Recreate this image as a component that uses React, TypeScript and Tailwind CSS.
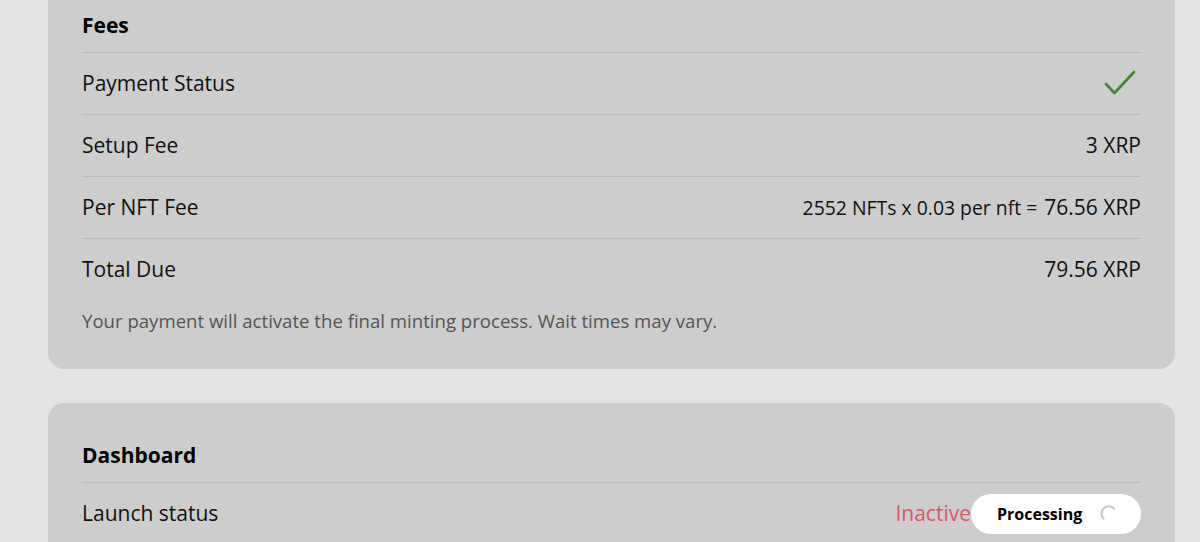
// @ts-nocheck
import React from "react";

const font = { fontFamily: '"Segoe UI", "Open Sans", "Noto Sans", sans-serif' };

function CheckIcon() {
  return (
    <svg width="34" height="30" viewBox="0 0 34 30" fill="none">
      <path d="M3 15 L11.5 24 L31 3" stroke="#3b8a2c" strokeWidth="2.6" strokeLinecap="round" strokeLinejoin="round" />
    </svg>
  );
}

function Spinner() {
  return (
    <svg width="20" height="20" viewBox="0 0 20 20" fill="none">
      <path d="M15 4.5 A7 7 0 0 0 4.5 14.5" stroke="#c8c8c8" strokeWidth="2.2" strokeLinecap="round" />
    </svg>
  );
}

function Row({ label, children, last }: { label: string; children: React.ReactNode; last?: boolean }) {
  return (
    <div className={last ? "flex h-[61px] items-center justify-between" : "flex h-[62px] items-center justify-between border-b border-[#bababa]"}>
      <span className="text-[21px] text-[#111]">{label}</span>
      <div className="flex items-center text-[21px] text-[#111]">{children}</div>
    </div>
  );
}

export default function App() {
  return (
    <div className="h-[542px] w-[1200px] overflow-hidden bg-[#e4e4e4]" style={font}>
      <div className="-mt-[27px] flex flex-col gap-[34px] pl-[48px] pr-[25px]">
        <div className="rounded-2xl bg-[#cdcdcd] px-[34px] pt-[38px] pb-[36px]">
          <div className="border-b border-[#bababa] pb-[13px]">
            <h3 className="text-[21px] font-bold leading-[28px] text-black">Fees</h3>
          </div>
          <Row label="Payment Status">
            <div className="mr-[4px]">
              <CheckIcon />
            </div>
          </Row>
          <Row label="Setup Fee">3 XRP</Row>
          <Row label="Per NFT Fee">
            <span className="mr-[7px] text-[19.4px]">2552 NFTs x 0.03 per nft =</span>
            <span>76.56 XRP</span>
          </Row>
          <Row label="Total Due" last>
            79.56 XRP
          </Row>
          <p className="mt-[9px] text-[18.6px] leading-[24px] text-[#555]">
            Your payment will activate the final minting process. Wait times may vary.
          </p>
        </div>

        <div className="rounded-2xl bg-[#cdcdcd] px-[34px] pt-[38px] pb-[34px]">
          <div className="border-b border-[#bababa] pb-[13px]">
            <h3 className="text-[21px] font-bold leading-[28px] text-black">Dashboard</h3>
          </div>
          <div className="flex h-[62px] items-center justify-between">
            <span className="text-[21px] text-[#111]">Launch status</span>
            <div className="flex items-center">
              <span className="text-[21px] text-[#d9566c]">Inactive</span>
              <div className="flex h-[40px] w-[170px] items-center rounded-full bg-white pl-[26px]">
                <span className="text-[16px] font-bold text-black">Processing</span>
                <div className="ml-[17px]">
                  <Spinner />
                </div>
              </div>
            </div>
          </div>
        </div>
      </div>
    </div>
  );
}
